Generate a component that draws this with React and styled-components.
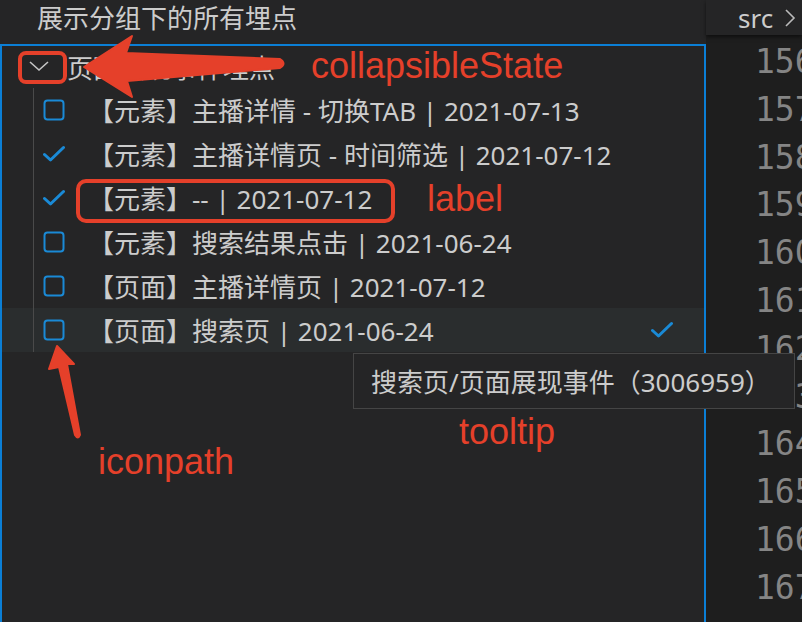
import React from "react";
import styled, { createGlobalStyle } from "styled-components";

const GlobalStyle = createGlobalStyle`
  body {
    margin: 0;
    background: #1e1e1e;
    font-family: "Noto Sans", "Noto Sans CJK SC", sans-serif;
  }
`;

const items = [
  { label: "【元素】主播详情 - 切换TAB | 2021-07-13", checked: false },
  { label: "【元素】主播详情页 - 时间筛选 | 2021-07-12", checked: true },
  { label: "【元素】-- | 2021-07-12", checked: true },
  { label: "【元素】搜索结果点击 | 2021-06-24", checked: false },
  { label: "【页面】主播详情页 | 2021-07-12", checked: false },
  { label: "【页面】搜索页 | 2021-06-24", checked: false, selected: true },
];

const lines = [156, 157, 158, 159, 160, 161, 162, 163, 164, 165, 166, 167];

const Box = () => (
  <svg width="22" height="22" viewBox="0 0 22 22">
    <rect x="1.5" y="1.5" width="19" height="19" rx="3" fill="none" stroke="#1a8ad6" strokeWidth="2" />
  </svg>
);

const Check = () => (
  <svg width="22" height="22" viewBox="0 0 22 22">
    <path d="M1.5 11.5 L7.5 17 L20.5 4.5" fill="none" stroke="#1a8ad6" strokeWidth="3" strokeLinecap="round" strokeLinejoin="round" />
  </svg>
);

const App = () => {
  return (
    <Window>
      <GlobalStyle />
      <Sidebar>
        <SideTitle>展示分组下的所有埋点</SideTitle>
        <Tree>
          <GroupRow>
            <svg width="22" height="14" viewBox="0 0 22 14">
              <path d="M2 2 L11 10 L20 2" fill="none" stroke="#c5c5c5" strokeWidth="1.6" />
            </svg>
            <span>页面展现事件埋点</span>
          </GroupRow>
          <Children>
            {items.map((it) => (
              <Row key={it.label} $selected={it.selected}>
                <IconSlot>{it.checked ? <Check /> : <Box />}</IconSlot>
                <Label>{it.label}</Label>
                {it.selected && (
                  <TrailCheck>
                    <Check />
                  </TrailCheck>
                )}
              </Row>
            ))}
          </Children>
        </Tree>
      </Sidebar>
      <Editor>
        <Breadcrumb>
          src
          <svg width="14" height="22" viewBox="0 0 14 22">
            <path d="M3 3 L11 11 L3 19" fill="none" stroke="#bbbbbb" strokeWidth="1.6" />
          </svg>
        </Breadcrumb>
        <Gutter>
          {lines.map((n) => (
            <div key={n}>{n}</div>
          ))}
        </Gutter>
      </Editor>

      <Tooltip>搜索页/页面展现事件（3006959）</Tooltip>

      <Marks width="802" height="622" viewBox="0 0 802 622">
        <g fill="none" stroke="#e5402a" strokeWidth="4">
          <rect x="20" y="53" width="45" height="29" rx="6" />
          <rect x="78" y="181" width="315" height="40" rx="8" />
        </g>
        <g fill="#e5402a" stroke="#e5402a" strokeWidth="2" strokeLinejoin="round">
          <path d="M84 67 L132 36 L126 53 L280 59 Q287 63.5 280 68 L127 81 L132 97 Z" />
          <path d="M57 346 L74 364 L67 364 L80 435 Q78 440 75 435 L59 367 L49 369 Z" />
        </g>
      </Marks>
      <Note $x={311} $y={46}>collapsibleState</Note>
      <Note $x={427} $y={179}>label</Note>
      <Note $x={459} $y={412}>tooltip</Note>
      <Note $x={98} $y={442}>iconpath</Note>
    </Window>
  );
};

const Window = styled.div`
  position: relative;
  width: 802px;
  height: 622px;
  display: flex;
  overflow: hidden;
`;

const Sidebar = styled.div`
  width: 706px;
  background: #252526;
  display: flex;
  flex-direction: column;
`;

const SideTitle = styled.div`
  height: 44px;
  line-height: 36px;
  padding-left: 37px;
  font-size: 26px;
  color: #cccccc;
`;

const Tree = styled.div`
  flex: 1;
  border: 2px solid #0b7fd6;
  border-bottom: none;
`;

const GroupRow = styled.div`
  height: 42px;
  display: flex;
  align-items: center;
  gap: 17px;
  padding-left: 26px;
  font-size: 26px;
  color: #cccccc;
`;

const Children = styled.div`
  position: relative;
  &::before {
    content: "";
    position: absolute;
    left: 31px;
    top: 0;
    bottom: 0;
    width: 1px;
    background: #4a4a4a;
  }
`;

const Row = styled.div`
  height: 44px;
  display: flex;
  align-items: center;
  padding-left: 41px;
  padding-right: 31px;
  background: ${(p) => (p.$selected ? "#2a2d2e" : "transparent")};
`;

const IconSlot = styled.div`
  width: 22px;
  height: 22px;
  margin-right: 23px;
  svg {
    display: block;
  }
`;

const Label = styled.span`
  font-size: 26px;
  color: #cccccc;
  white-space: nowrap;
`;

const TrailCheck = styled.div`
  margin-left: auto;
  svg {
    display: block;
  }
`;

const Editor = styled.div`
  flex: 1;
  background: #1e1e1e;
  display: flex;
  flex-direction: column;
  min-width: 0;
`;

const Breadcrumb = styled.div`
  height: 35px;
  background: #252526;
  box-shadow: 0 2px 4px rgba(0, 0, 0, 0.55);
  display: flex;
  align-items: center;
  gap: 10px;
  padding-left: 32px;
  font-size: 26px;
  color: #cccccc;
  white-space: nowrap;
  position: relative;
  z-index: 1;
`;

const Gutter = styled.div`
  padding-top: 3px;
  padding-left: 49px;
  font-family: "DejaVu Sans Mono", monospace;
  font-size: 33px;
  line-height: 47.8px;
  color: #858585;
  white-space: nowrap;
`;

const Tooltip = styled.div`
  position: absolute;
  left: 353px;
  top: 353px;
  width: 442px;
  height: 56px;
  box-sizing: border-box;
  padding-left: 17px;
  display: flex;
  align-items: center;
  background: #252526;
  border: 1px solid #454545;
  font-size: 26px;
  color: #cccccc;
  white-space: nowrap;
`;

const Marks = styled.svg`
  position: absolute;
  left: 0;
  top: 0;
  pointer-events: none;
`;

const Note = styled.span`
  position: absolute;
  left: ${(p) => p.$x}px;
  top: ${(p) => p.$y}px;
  font-family: "Liberation Sans", Arial, sans-serif;
  font-size: 36px;
  line-height: 40px;
  color: #e5402a;
  white-space: nowrap;
`;

export default App;
